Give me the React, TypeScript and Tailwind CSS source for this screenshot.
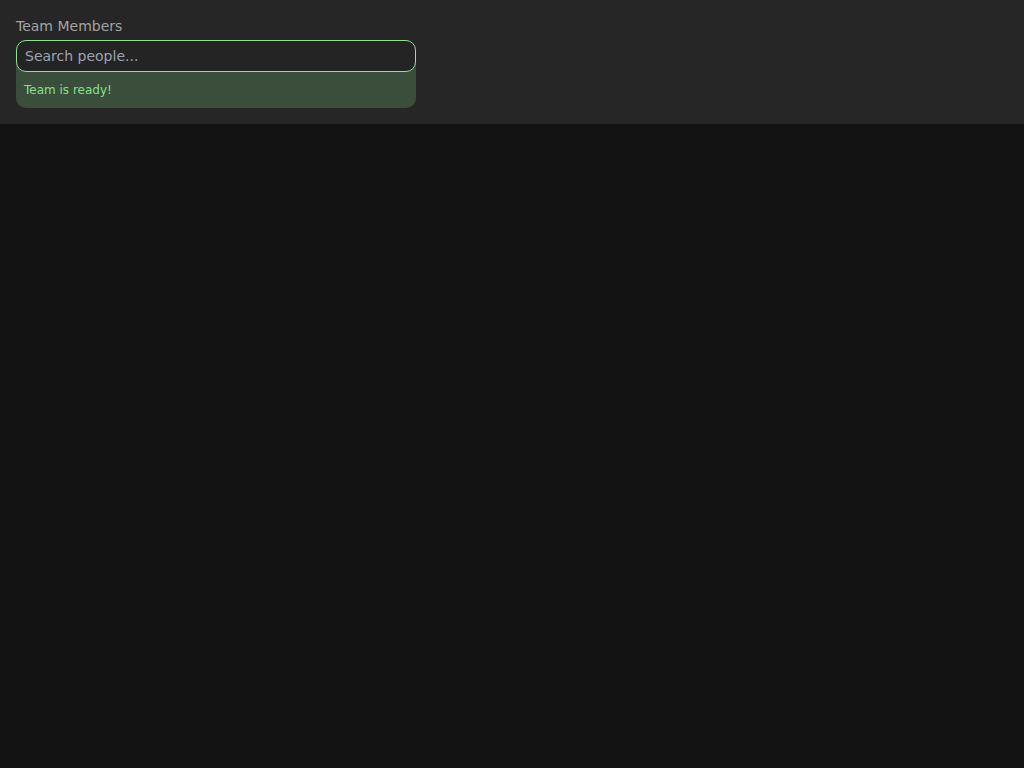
import React from "react";

export default function App() {
  return (
    <div className="min-h-screen bg-[#131313]" style={{ fontFamily: '"DejaVu Sans", sans-serif' }}>
      <div className="bg-[#262626] p-4">
        <div className="w-[400px]">
          <div className="text-sm text-[#a3a3a3] leading-5 mb-[4px]">Team Members</div>
          <div className="flex flex-col">
            <input
              placeholder="Search people..."
              className="relative z-10 h-8 w-full rounded-[10px] border border-[#8fe08f] bg-[#242424] px-2 text-sm text-[#e5e5e5] placeholder-[#9ca3af] outline-none"
            />
            <div className="-mt-4 rounded-b-[10px] bg-[#3b4d3b] px-2 pt-[26px] pb-[10px] text-xs leading-4 text-[#86e08a]">
              Team is ready!
            </div>
          </div>
        </div>
      </div>
    </div>
  );
}
